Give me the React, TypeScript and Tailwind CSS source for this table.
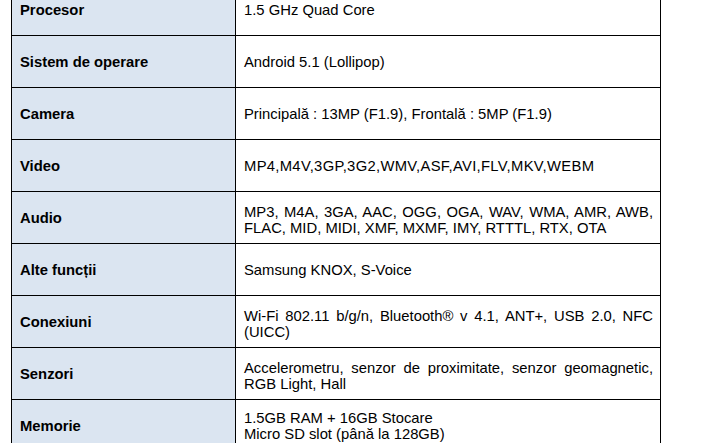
const rows: { label: string; lines: string[]; wide?: boolean }[] = [
  { label: "Procesor", lines: ["1.5 GHz Quad Core"] },
  { label: "Sistem de operare", lines: ["Android 5.1 (Lollipop)"] },
  { label: "Camera", lines: ["Principală : 13MP (F1.9), Frontală : 5MP (F1.9)"] },
  { label: "Video", lines: ["MP4,M4V,3GP,3G2,WMV,ASF,AVI,FLV,MKV,WEBM"], wide: true },
  {
    label: "Audio",
    lines: [
      "MP3, M4A, 3GA, AAC, OGG, OGA, WAV, WMA, AMR, AWB,",
      "FLAC, MID, MIDI, XMF, MXMF, IMY, RTTTL, RTX, OTA",
    ],
  },
  { label: "Alte funcții", lines: ["Samsung KNOX, S-Voice"] },
  {
    label: "Conexiuni",
    lines: ["Wi-Fi 802.11 b/g/n, Bluetooth® v 4.1, ANT+, USB 2.0, NFC", "(UICC)"],
  },
  {
    label: "Senzori",
    lines: ["Accelerometru, senzor de proximitate, senzor geomagnetic,", "RGB Light, Hall"],
  },
];

const App = () => {
  return (
    <div
      className="w-[709px] h-[443px] overflow-hidden bg-white text-black"
      style={{ fontFamily: '"Liberation Sans", Arial, sans-serif' }}
    >
      <div className="-mt-[16px] ml-[11px] w-[650px] border-l border-r border-black text-[14.8px] leading-[16px]">
        {rows.map((row) => (
          <div
            key={row.label}
            className="grid grid-cols-[224px_1fr] h-[52px] border-b border-black"
          >
            <div className="flex items-center bg-[#dbe5f1] border-r border-black pl-[8px] font-bold">
              {row.label}
            </div>
            <div
              className={
                row.lines.length > 1
                  ? "flex items-center pl-[8px] pr-[7px] pt-[4px]"
                  : "flex items-center pl-[8px] pr-[7px]"
              }
            >
              <div className={row.wide ? "w-full tracking-[0.3px]" : "w-full"}>
                {row.lines.map((line, i) => (
                  <div
                    key={i}
                    className={
                      i < row.lines.length - 1
                        ? "whitespace-nowrap text-justify [text-align-last:justify]"
                        : "whitespace-nowrap"
                    }
                  >
                    {line}
                  </div>
                ))}
              </div>
            </div>
          </div>
        ))}
        <div className="grid grid-cols-[224px_1fr] h-[52px]">
          <div className="flex items-center bg-[#dbe5f1] border-r border-black pl-[8px] font-bold">
            Memorie
          </div>
          <div className="flex items-center pl-[8px] pr-[7px]">
            <div className="w-full">
              <div>1.5GB RAM + 16GB Stocare</div>
              <div>Micro SD slot (până la 128GB)</div>
            </div>
          </div>
        </div>
      </div>
    </div>
  );
};

export default App;
